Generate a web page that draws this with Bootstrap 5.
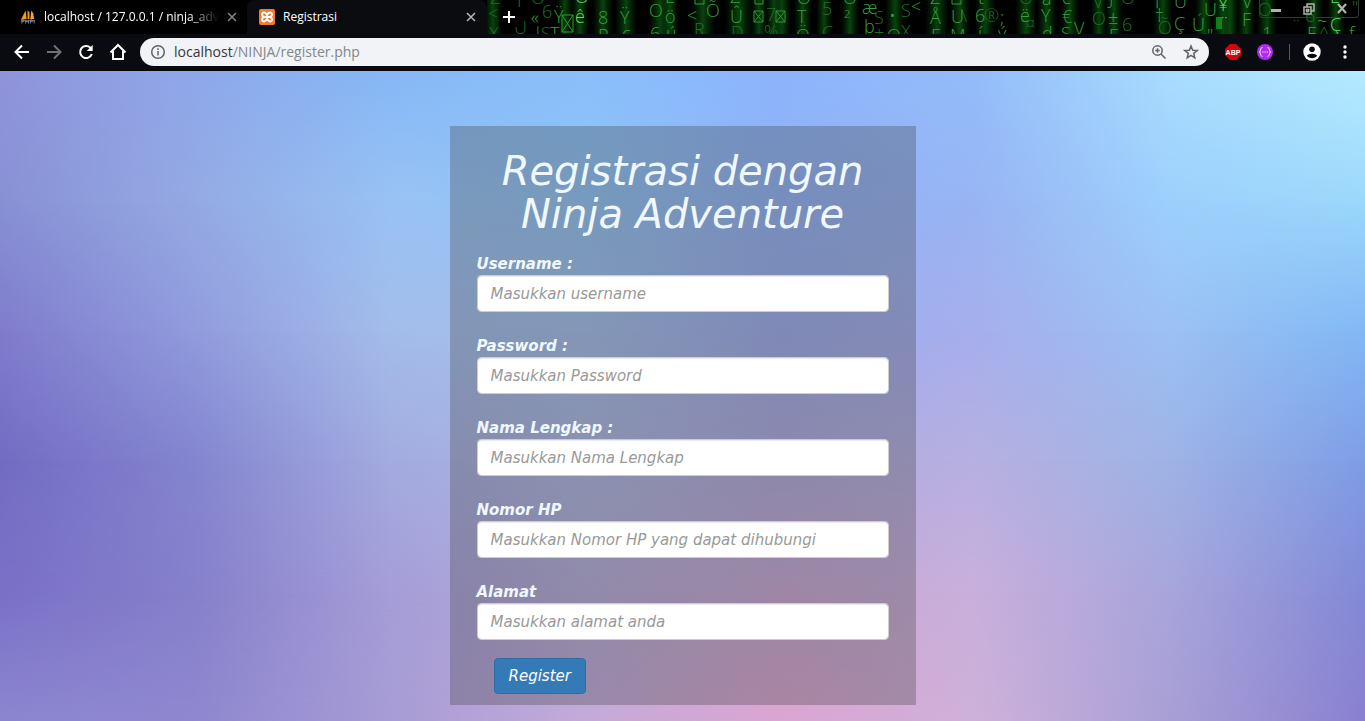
<!DOCTYPE html>
<html lang="id">
<head>
<meta charset="utf-8">
<meta name="viewport" content="width=device-width, initial-scale=1">
<title>Registrasi</title>
<link rel="stylesheet" href="https://cdn.jsdelivr.net/npm/bootstrap@5.3.0/dist/css/bootstrap.min.css">
<style>
body { font-family: "DejaVu Sans", Verdana, sans-serif; font-style: italic; overflow-x: hidden; }
.chrome-ui { font-family: "Open Sans", "Segoe UI", sans-serif; font-style: normal; background: #0a0b10; color: #fff; }
.chrome-ui button { border: 0; background: none; padding: 0; color: inherit; line-height: 0; }
.chrome-ui svg { display: block; }

/* tab strip */
.tab-strip { height: 34px; background: #000; }
.browser-tab { width: 240px; height: 34px; font-size: 12px; color: #fff; }
.browser-tab a { color: inherit; }
.tab-first { width: 247px; padding-left: 20px; padding-right: 10px; }
.tab-active { background: #0b0c10; border-radius: 8px 8px 0 0; padding-left: 12px; padding-right: 11px; }
.tab-title { white-space: nowrap; overflow: hidden; }
.tab-fade { -webkit-mask-image: linear-gradient(90deg, #000 82%, transparent); mask-image: linear-gradient(90deg, #000 82%, transparent); }
.rain { min-width: 0; overflow: hidden; }
.rain text { font-family: "Open Sans", sans-serif; font-weight: 300; font-size: 18px; }
.new-tab { left: 12px; top: 7px; width: 20px; height: 20px; background: #000 !important; }
.window-buttons { top: 0; right: 6px; width: 100px; height: 18px; border: 1px solid #34383a; border-top: 0; border-radius: 0 0 4px 4px; }

/* toolbar */
.tool-bar { height: 37px; padding: 4px 12px 5px 13px; border-bottom: 1px solid #04060b; }
.nav-icons { gap: 14px; margin-right: 13px; }
.omnibox { height: 28px; border-radius: 14px; background: #f1f3f6; padding: 0 10px; color: #5f6368; }
.address { font-size: 14px; color: #80868b; min-width: 0; }
.address b { font-weight: 400; color: #333639; }
.tool-divider { width: 1px; height: 16px; background: #55575c; margin: 0 13px 0 16px; }

/* page backdrop: stacked colour rows, each fading in over the one above */
.page-area { display: grid; }
.page-area > * { grid-area: 1 / 1; }
.sky { display: grid; }
.sky > i { grid-area: 1 / 1; }
.sky1 { background: linear-gradient(90deg, #9094da, #8fa8ea, #86b8f6, #89c0fb, #8db4fb, #93bdfa, #a9dcfe, #b6ebff); }
.sky2 { background: linear-gradient(90deg, #8890d4, #94aae4, #98c2f4, #91c4f6, #90b2f6, #98b4f3, #9dd0fc, #9ad8fb); mask-image: linear-gradient(transparent 0, #000 20%); }
.sky3 { background: linear-gradient(90deg, #7f7ccc, #919bdd, #a3bdea, #a4bfec, #9daced, #a6aeec, #9bc1f3, #82b8f5); mask-image: linear-gradient(transparent 20%, #000 40%); }
.sky4 { background: linear-gradient(90deg, #736cc3, #8385cf, #a3abdf, #adb7e4, #b0aadf, #b7b0e1, #9eb3e5, #7e9de5); mask-image: linear-gradient(transparent 40%, #000 60%); }
.sky5 { background: linear-gradient(90deg, #7a70c6, #8680cb, #a59dd7, #b7addb, #c8a7d3, #c8afdb, #a8a5db, #8289d6); mask-image: linear-gradient(transparent 60%, #000 80%); }
.sky6 { background: linear-gradient(90deg, #8c86d0, #8f87cf, #a79cd5, #c4aad8, #dba5d0, #ceb1da, #a89fd5, #8a80d0); mask-image: linear-gradient(transparent 80%, #000 100%); }

/* registration panel */
.panel-wrap { padding: 55px 12px 16px; }
.register-panel { max-width: 466px; background: rgba(60, 60, 60, .3); padding: 24px 27px 11px; color: #f0f8ff; }
.register-panel h1 { font-size: 40px; line-height: 43px; margin: 0 0 17px; font-weight: 400; }
.register-panel .form-label { display: block; font-size: 15px; line-height: 22px; font-weight: 700; margin: 0; }
.register-panel .form-control { height: 37px; padding: 6px 13px; font-size: 15px; font-style: italic; border: 1px solid #ccc; border-radius: 4px; color: #555; box-shadow: inset 0 1px 1px rgba(0, 0, 0, .08); }
.register-panel .form-control::placeholder { color: #999; }
.field { margin-bottom: 23px; }
.field-last { margin-bottom: 18px; }
.btn-register { height: 36px; margin-left: 17px; padding: 0 14px; font-size: 15px; font-style: italic; color: #fff; background: #337ab7; border: 1px solid #2e6da4; border-radius: 4px; }
.btn-register:hover { background: #286090; color: #fff; }
</style>
</head>
<body class="d-flex flex-column min-vh-100">

<header class="chrome-ui">
  <div class="tab-strip d-flex">
    <div class="browser-tab tab-first d-flex align-items-center flex-shrink-0">
      <svg class="flex-shrink-0" width="16" height="16" viewBox="0 0 17 16"><path d="M6 1 7 10 1 11ZM8 1 10 3 10 10 8 10Z" fill="#f89c0e"/><path d="M12 1 14 4 15 10 11 10Z" fill="#f6a635"/><path d="M1 12h15M2 15v-4h2v2H2M6 15v-4M6 13h3M9 11v4M11 15v-4h2v2h-2M15 11v4" stroke="#7c83a6" fill="none"/></svg>
      <a href="#" class="tab-title tab-fade text-decoration-none ms-2 flex-grow-1">localhost / 127.0.0.1 / ninja_adver</a>
      <button aria-label="Tutup tab" class="ms-2"><svg width="10" height="10" viewBox="0 0 10 10" stroke="#85878b" stroke-width="1.500"><path d="m1 1 8 8M9 1 1 9"/></svg></button>
    </div>
    <div class="browser-tab tab-active d-flex align-items-center flex-shrink-0">
      <svg class="flex-shrink-0" width="16" height="16" viewBox="0 0 16 16"><rect width="16" height="16" rx="2" fill="#f47b2b"/><path d="M8 6.200C7 3 3 2.700 3 5.500 3 7 4 7.300 4.600 8 4 8.700 3 9 3 10.500 3 13.300 7 13 8 9.800 9 13 13 13.300 13 10.500 13 9 12 8.700 11.400 8 12 7.300 13 7 13 5.500 13 2.700 9 3 8 6.200ZM5.500 8h5" fill="none" stroke="#fff" stroke-width="2"/></svg>
      <a href="#" class="tab-title text-decoration-none ms-2 flex-grow-1">Registrasi</a>
      <button aria-label="Tutup tab"><svg width="10" height="10" viewBox="0 0 10 10" stroke="#b5b7ba" stroke-width="1.500"><path d="m1 1 8 8M9 1 1 9"/></svg></button>
    </div>
    <div class="rain position-relative flex-grow-1">
      <svg width="100%" height="34" viewBox="0 0 878 34" preserveAspectRatio="xMinYMin slice" aria-hidden="true">
        <defs><linearGradient id="glow"><stop offset="0" stop-color="#08400c" stop-opacity="0"/><stop offset=".5" stop-color="#0a5410" stop-opacity=".8"/><stop offset="1" stop-color="#08400c" stop-opacity="0"/></linearGradient></defs>
        <g fill="url(#glow)">
          <rect x="-4" width="20" height="34"/><rect x="70" width="16" height="34"/><rect x="84" width="18" height="34"/><rect x="106" width="20" height="34"/><rect x="128" width="22" height="34"/><rect x="162" width="22" height="34"/><rect x="174" width="18" height="34"/><rect x="204" width="24" height="34"/><rect x="238" width="28" height="34"/><rect x="264" width="16" height="34"/><rect x="278" width="18" height="34"/><rect x="286" width="18" height="34"/><rect x="307" width="18" height="34"/><rect x="329" width="16" height="34"/><rect x="354" width="18" height="34"/><rect x="398" width="20" height="34"/><rect x="438" width="24" height="34"/><rect x="463" width="20" height="34"/><rect x="488" width="20" height="34"/><rect x="528" width="22" height="34"/><rect x="550" width="20" height="34"/><rect x="574" width="18" height="34"/><rect x="604" width="16" height="34"/><rect x="618" width="18" height="34"/><rect x="666" width="20" height="34"/><rect x="708" width="18" height="34"/><rect x="724" width="24" height="34"/><rect x="734" width="18" height="34"/><rect x="750" width="18" height="34"/><rect x="770" width="20" height="34"/><rect x="818" width="18" height="34"/><rect x="840" width="18" height="34"/>
        </g>
        <g fill="#1f7027">
          <text x="3" y="4">Z</text><text x="1" y="20">&lt;</text><text x="2" y="40">X</text><text x="30" y="7">I</text><text x="27" y="34">U</text><text x="44" y="4">O</text><text x="55" y="18" font-size="22">6</text><text x="54" y="40">S</text><text x="207" y="36" font-size="26">R</text><text x="244" y="39">D</text><text x="279" y="21">7</text><text x="277" y="38">%</text><text x="335" y="15">5</text><text x="335" y="39">C</text><text x="387" y="24">S</text><text x="387" y="39">+</text><text x="414" y="17">S</text><text x="414" y="38">X</text><text x="474" y="22">\</text><text x="497" y="22" font-size="17">®</text><text x="538" y="30">¤</text><text x="532" y="4">O</text><text x="606" y="8">V</text><text x="605" y="25">O</text><text x="634" y="4">O</text><text x="635" y="31" font-size="22">6</text><text x="671" y="34" font-size="23">Õ</text><text x="771" y="16" font-size="21">Ö</text><text x="804" y="33">¨</text><text x="818" y="22">6</text><text x="832" y="40">^</text><text x="865" y="14">"</text>
        </g>
        <g fill="#36a03e">
          <text x="44" y="24">«</text><text x="46" y="40">|</text><text x="63" y="40">T</text><text x="67" y="23">Ÿ</text><text x="111" y="24">8</text><text x="111" y="42">R</text><text x="133" y="24">Ÿ</text><text x="135" y="40">ç</text><text x="162" y="17" font-size="22">O</text><text x="163" y="40">6</text><text x="178" y="3">E</text><text x="178" y="23">ö</text><text x="179" y="40">ú</text><text x="200" y="22">&lt;</text><text x="219" y="17">Õ</text><text x="243" y="23">Û</text><text x="243" y="3">Z</text><text x="310" y="4">O</text><text x="310" y="23">T</text><text x="309" y="42">Ö</text><text x="356" y="4">O</text><text x="357" y="25">²</text><text x="375" y="14">æ</text><text x="377" y="33">þ</text><text x="402" y="22">•</text><text x="400" y="42">O</text><text x="424" y="13">&lt;</text><text x="443" y="4">Z</text><text x="443" y="24">Å</text><text x="444" y="42">E</text><text x="464" y="23">U</text><text x="463" y="42">M</text><text x="488" y="22">6</text><text x="491" y="4">t</text><text x="491" y="40">í</text><text x="513" y="24">;</text><text x="511" y="40">ý</text><text x="533" y="22">ë</text><text x="555" y="5">a</text><text x="554" y="22">Y</text><text x="555" y="40">d</text><text x="575" y="4">c</text><text x="575" y="23">€</text><text x="574" y="40">S</text><text x="587" y="35">V</text><text x="621" y="24">±</text><text x="622" y="42">F</text><text x="622" y="4">J</text><text x="668" y="5">¡</text><text x="668" y="22">†</text><text x="687" y="8">U</text><text x="687" y="30">Ç</text><text x="705" y="31">Ú</text><text x="717" y="16" font-size="19">U</text><text x="720" y="42">"</text><text x="755" y="8">V</text><text x="755" y="26">F</text><text x="775" y="40">1</text><text x="820" y="40">E</text><text x="830" y="27">~</text><text x="862" y="40">f</text>
        </g>
        <g fill="#55e45c"><text x="88" y="3">O</text><text x="88" y="23">ê</text><text x="731" y="11">¥</text><text x="732" y="30">¨</text><text x="843" y="31">Ç</text><text x="843" y="3">E</text></g>
        <g fill="none" stroke="#2c9a34"><path d="M75 15h11v17H75zM75 15l11 17m0-17L75 32M267 11h9v11h-9zM267 11l9 11m0-11-9 11M289 11h9v11h-9zM289 11l9 11m0-11-9 11"/><path d="M208 0v4h9V0M268 0v4h8V0M465 0v4h9V0"/></g>
        <path d="M729 17h6v12h-6z" fill="#18a71e" opacity=".7"/>
      </svg>
      <button class="new-tab position-absolute d-flex align-items-center justify-content-center" aria-label="Tab baru"><svg width="12" height="12" viewBox="0 0 12 12" stroke="#fff" stroke-width="2"><path d="M6 0v12M0 6h12"/></svg></button>
      <div class="window-buttons position-absolute d-flex align-items-center">
        <button aria-label="Kecilkan" class="flex-fill d-flex justify-content-center"><svg width="12" height="12" viewBox="0 0 12 12"><path d="M1 6h10v3H1z" fill="#aeb2ae"/></svg></button>
        <button aria-label="Pulihkan" class="flex-fill d-flex justify-content-center"><svg width="12" height="12" viewBox="0 0 12 12" fill="none" stroke="#aeb2ae" stroke-width="1.500"><path d="M1 4h7v7H1zM4 4V1h7v7H8"/><path d="M3.500 6.500h2v2h-2z"/></svg></button>
        <button aria-label="Tutup" class="flex-fill d-flex justify-content-center"><svg width="12" height="12" viewBox="0 0 12 12" stroke="#aeb2ae" stroke-width="2.200"><path d="m2 1 8 9M10 1 2 10"/></svg></button>
      </div>
    </div>
  </div>

  <nav class="tool-bar d-flex align-items-center" aria-label="Navigasi">
    <div class="nav-icons d-flex align-items-center">
      <button aria-label="Kembali"><svg width="18" height="18" viewBox="0 0 18 18" fill="none" stroke="#fff" stroke-width="2"><path d="M16 9H3M9 2.500 2.500 9 9 15.500"/></svg></button>
      <button aria-label="Maju"><svg width="18" height="18" viewBox="0 0 18 18" fill="none" stroke="#6f7175" stroke-width="2"><path d="M2 9h13M9 2.500 15.500 9 9 15.500"/></svg></button>
      <button aria-label="Muat ulang"><svg width="18" height="18" viewBox="0 0 18 18"><path d="M14.800 11A6 6 0 1 1 13.400 4.800" fill="none" stroke="#fff" stroke-width="2"/><path d="M15.700 2v6h-6Z" fill="#fff"/></svg></button>
      <button aria-label="Beranda"><svg width="18" height="18" viewBox="0 0 18 18"><path d="M1.500 9.500 9 2l7.500 7.500M4 8v8h10V8" fill="none" stroke="#fff" stroke-width="2"/></svg></button>
    </div>
    <div class="omnibox d-flex align-items-center flex-grow-1">
      <svg width="16" height="16" viewBox="0 0 16 16" fill="none" stroke="#5f6368" stroke-width="1.500"><circle cx="8" cy="8" r="6.300"/><path d="M8 7v4.500M8 4.300v1.700"/></svg>
      <div class="address flex-grow-1 ms-2"><b>localhost</b>/NINJA/register.php</div>
      <button aria-label="Perbesar" class="me-3"><svg width="16" height="16" viewBox="0 0 16 16" fill="none" stroke="#5f6368" stroke-width="1.500"><circle cx="6.500" cy="6.500" r="4.700"/><path d="m10 10 4.500 4.500M6.500 4.300v4.400M4.300 6.500h4.400"/></svg></button>
      <button aria-label="Bookmark"><svg width="16" height="16" viewBox="0 0 16 16" fill="none" stroke="#5f6368" stroke-width="1.500"><path d="m8 2 1.700 4.200 4.500.3-3.500 2.900 1.100 4.400L8 11.400l-3.800 2.400 1.100-4.400-3.500-2.900 4.500-.3Z"/></svg></button>
    </div>
    <div class="d-flex align-items-center ms-3">
      <button aria-label="Adblock Plus" class="me-3"><svg width="16" height="16" viewBox="0 0 16 16"><path d="M5 0h6l5 5v6l-5 5H5l-5-5V5Z" fill="#d0080c"/><text x="8" y="11" text-anchor="middle" font-family="Liberation Sans, sans-serif" font-weight="700" font-size="7" fill="#fff">ABP</text></svg></button>
      <button aria-label="Ekstensi"><svg width="16" height="16" viewBox="0 0 16 16"><circle cx="8" cy="8" r="8" fill="#ad2cf0"/><path d="M5.500 3.500Q3.500 3.500 3.500 6T2 8q1.500 0 1.500 2t2 2.500M10.500 3.500q2 0 2 2.500T14 8q-1.500 0-1.500 2t-2 2.500M5 8h1.500M7.300 8h1.500M9.600 8H11" fill="none" stroke="#f0d5ff"/></svg></button>
      <div class="tool-divider"></div>
      <button aria-label="Profil" class="me-3"><svg width="18" height="18" viewBox="0 0 18 18"><circle cx="9" cy="9" r="8.700" fill="#fff"/><circle cx="9" cy="6.300" r="2.800" fill="#0a0b10"/><path d="M3.800 12.800C5 10 13 10 14.200 12.800 12 16 6 16 3.800 12.800Z" fill="#0a0b10"/></svg></button>
      <button aria-label="Menu"><svg width="16" height="16" viewBox="0 0 16 16" fill="#fff"><circle cx="8" cy="3" r="1.700"/><circle cx="8" cy="8" r="1.700"/><circle cx="8" cy="13" r="1.700"/></svg></button>
    </div>
  </nav>
</header>

<div class="page-area flex-grow-1">
  <div class="sky" aria-hidden="true"><i class="sky1"></i><i class="sky2"></i><i class="sky3"></i><i class="sky4"></i><i class="sky5"></i><i class="sky6"></i></div>
  <main class="panel-wrap">
    <form class="register-panel mx-auto position-relative">
      <h1 class="text-center">Registrasi dengan Ninja Adventure</h1>
      <div class="field"><label class="form-label" for="username">Username :</label><input class="form-control" id="username" type="text" placeholder="Masukkan username"></div>
      <div class="field"><label class="form-label" for="password">Password :</label><input class="form-control" id="password" type="password" placeholder="Masukkan Password"></div>
      <div class="field"><label class="form-label" for="nama">Nama Lengkap :</label><input class="form-control" id="nama" type="text" placeholder="Masukkan Nama Lengkap"></div>
      <div class="field"><label class="form-label" for="hp">Nomor HP</label><input class="form-control" id="hp" type="tel" placeholder="Masukkan Nomor HP yang dapat dihubungi"></div>
      <div class="field-last"><label class="form-label" for="alamat">Alamat</label><input class="form-control" id="alamat" type="text" placeholder="Masukkan alamat anda"></div>
      <button type="submit" class="btn btn-register">Register</button>
    </form>
  </main>
</div>

<script src="https://cdn.jsdelivr.net/npm/bootstrap@5.3.0/dist/js/bootstrap.bundle.min.js"></script>
</body>
</html>
